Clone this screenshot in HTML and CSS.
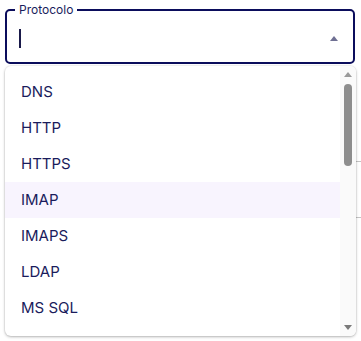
FILE: index.html
```html
<!DOCTYPE html>
<html lang="pt">
<head>
<meta charset="utf-8">
<link rel="stylesheet" href="styles.css">
</head>
<body>
<div class="page">
  <fieldset class="field">
    <legend class="field-label">Protocolo</legend>
    <div class="control">
      <span class="caret"></span>
      <span class="arrow"></span>
    </div>
  </fieldset>
  <div class="menu">
    <ul class="options">
      <li class="option">DNS</li>
      <li class="option">HTTP</li>
      <li class="option">HTTPS</li>
      <li class="option active">IMAP</li>
      <li class="option">IMAPS</li>
      <li class="option">LDAP</li>
      <li class="option">MS SQL</li>
    </ul>
    <div class="scrollbar">
      <span class="sb-up"></span>
      <span class="sb-thumb"></span>
      <span class="sb-space"></span>
      <span class="sb-down"></span>
    </div>
  </div>
</div>
</body>
</html>
```

FILE: styles.css
```css
html, body {
  margin: 0;
  padding: 0;
  background: #ffffff;
}
body {
  font-family: Inter, "Noto Sans", sans-serif;
  color: #1a1c5c;
  width: 361px;
  height: 341px;
  overflow: hidden;
  background-image:
    linear-gradient(#c4c4c4, #c4c4c4),
    linear-gradient(#c4c4c4, #c4c4c4);
  background-repeat: no-repeat;
  background-size: 6px 1px, 6px 1px;
  background-position: 356px 161px, 356px 217px;
}
.page {
  padding: 2px 6px 0 5px;
  display: flex;
  flex-direction: column;
}
.field {
  margin: 0;
  padding: 0 8px 0 8px;
  border: 2px solid #0b0d5c;
  border-radius: 5px;
  min-width: 0;
}
.field-label {
  padding: 0 4px;
  font-size: 12px;
  line-height: 16px;
  color: #1a1c5c;
}
.control {
  height: 40px;
  padding: 0 7px 4px 4px;
  display: flex;
  align-items: center;
  justify-content: space-between;
}
.caret {
  width: 2px;
  height: 19px;
  background: #1a1a4a;
}
.arrow {
  width: 0;
  height: 0;
  border-left: 4.5px solid transparent;
  border-right: 4.5px solid transparent;
  border-bottom: 5px solid #6f7093;
}
.menu {
  margin-top: 2px;
  height: 270px;
  width: 351px;
  border-radius: 6px;
  background: #ffffff;
  box-shadow: 0 1px 3px rgba(0, 0, 0, 0.28), 0 0 0 1px rgba(0, 0, 0, 0.03);
  display: flex;
  overflow: hidden;
}
.options {
  list-style: none;
  margin: 0;
  padding: 8px 0 0 0;
  flex: 1;
}
.option {
  height: 36px;
  line-height: 36px;
  padding-left: 16px;
  font-size: 15px;
  color: #1a1c5c;
}
.option.active {
  background: #f8f4fe;
}
.scrollbar {
  width: 16px;
  background: #fafafa;
  display: flex;
  flex-direction: column;
  align-items: center;
  padding: 6px 0 6px 0;
}
.sb-up {
  width: 0;
  height: 0;
  border-left: 4.5px solid transparent;
  border-right: 4.5px solid transparent;
  border-bottom: 5px solid #9a9a9a;
  margin-left: -1px;
}
.sb-thumb {
  margin-top: 7px;
  margin-left: -1px;
  width: 8px;
  height: 82px;
  border-radius: 4px;
  background: #8e8e8e;
}
.sb-space {
  flex: 1;
}
.sb-down {
  width: 0;
  height: 0;
  border-left: 4.5px solid transparent;
  border-right: 4.5px solid transparent;
  border-top: 5px solid #7a7a7a;
  margin-left: -1px;
}
```
